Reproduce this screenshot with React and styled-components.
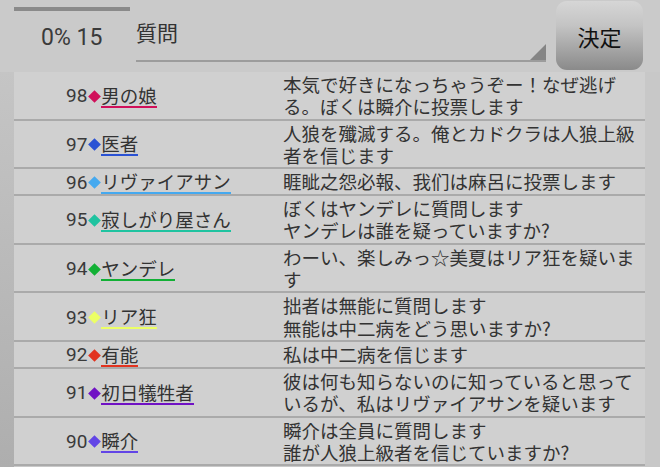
import React from "react";
import styled, { createGlobalStyle } from "styled-components";

const GlobalStyle = createGlobalStyle`
  html, body {
    margin: 0;
    padding: 0;
    background: #c9c9c9;
  }
  body {
    font-family: "Roboto", "Noto Sans CJK JP", sans-serif;
    color: #363636;
  }
`;

const rows = [
  { no: 98, color: "#d0105a", name: "男の娘", msg: "本気で好きになっちゃうぞー！なぜ逃げる。ぼくは瞬介に投票します" },
  { no: 97, color: "#2a52d4", name: "医者", msg: "人狼を殲滅する。俺とカドクラは人狼上級者を信じます" },
  { no: 96, color: "#45a9ef", name: "リヴァイアサン", msg: "睚眦之怨必報、我们は麻呂に投票します" },
  { no: 95, color: "#1fc3a0", name: "寂しがり屋さん", msg: "ぼくはヤンデレに質問します\nヤンデレは誰を疑っていますか?" },
  { no: 94, color: "#12b035", name: "ヤンデレ", msg: "わーい、楽しみっ☆美夏はリア狂を疑います" },
  { no: 93, color: "#ecff66", name: "リア狂", msg: "拙者は無能に質問します\n無能は中二病をどう思いますか?" },
  { no: 92, color: "#e2331f", name: "有能", msg: "私は中二病を信じます" },
  { no: 91, color: "#7012c4", name: "初日犠牲者", msg: "彼は何も知らないのに知っていると思っているが、私はリヴァイアサンを疑います" },
  { no: 90, color: "#6245e6", name: "瞬介", msg: "瞬介は全員に質問します\n誰が人狼上級者を信じていますか?" },
];

const Page = styled.div`
  width: 660px;
  height: 467px;
  overflow: hidden;
  display: flex;
  flex-direction: column;
`;

const Header = styled.div`
  height: 72px;
  display: flex;
  background: #cacaca;
`;

const ScoreBlock = styled.div`
  width: 122px;
  margin-left: 14px;
  display: flex;
  flex-direction: column;
`;

const Progress = styled.div`
  margin-top: 7px;
  width: 116px;
  height: 4px;
  background: #8a8a8a;
`;

const Score = styled.div`
  margin-top: 12px;
  padding-left: 27px;
  font-size: 23px;
  line-height: 30px;
  color: #3a3a3a;
`;

const QuestionField = styled.div`
  position: relative;
  width: 410px;
  box-sizing: content-box;
  height: 43px;
  padding-top: 17px;
  border-bottom: 2px solid #9c9c9c;
  font-family: "Noto Sans CJK JP", sans-serif;
  font-size: 21px;
  line-height: 30px;
  color: #333;
`;

const Corner = styled.div`
  position: absolute;
  right: 0;
  bottom: 0;
  width: 0;
  height: 0;
  border-left: 16px solid transparent;
  border-bottom: 16px solid #858585;
`;

const DecideButton = styled.button`
  margin: 1px 0 0 10px;
  width: 87px;
  height: 69px;
  border: none;
  border-radius: 11px;
  background: linear-gradient(#d6d6d6 0%, #c4c4c4 35%, #8a8a8a 100%);
  font-family: "Noto Sans CJK JP", sans-serif;
  font-size: 22px;
  color: #111;
  padding: 0;
`;

const Body = styled.div`
  flex: 1;
  display: flex;
`;

const LeftRail = styled.div`
  width: 14px;
  background: linear-gradient(#c5c5c5, #aeaeae);
`;

const List = styled.div`
  width: 631px;
  background: #d0d0d0;
  align-self: flex-start;
`;

const Row = styled.div`
  display: grid;
  grid-template-columns: 269px 1fr;
  border-bottom: 2px solid #aaaaaa;
`;

const Who = styled.div`
  display: flex;
  align-items: center;
  padding-left: 52px;
  padding-top: 2px;
`;

const Num = styled.span`
  font-size: 19px;
  line-height: 20px;
  color: #3a3a3a;
`;

const Diamond = styled.span`
  display: inline-block;
  flex: none;
  width: 9px;
  height: 9px;
  margin: 0 2px 0 3px;
  background: ${(p) => p.$color};
  transform: rotate(45deg);
`;

const Name = styled.span`
  font-family: "Noto Sans CJK JP", sans-serif;
  font-size: 18.5px;
  line-height: 21px;
  color: #333;
  border-bottom: 2.5px solid ${(p) => p.$color};
`;

const Message = styled.div`
  font-family: "Noto Sans CJK JP", sans-serif;
  font-size: 18.5px;
  line-height: 22.3px;
  padding: 1px 6px 1px 0;
  white-space: pre-line;
  color: #333;
`;

const RightRail = styled.div`
  flex: 1;
  background: #c8c8c8;
`;

export default function App() {
  return (
    <Page>
      <GlobalStyle />
      <Header>
        <ScoreBlock>
          <Progress />
          <Score>0% 15</Score>
        </ScoreBlock>
        <QuestionField>
          質問
          <Corner />
        </QuestionField>
        <DecideButton>決定</DecideButton>
      </Header>
      <Body>
        <LeftRail />
        <List>
          {rows.map((r) => (
            <Row key={r.no}>
              <Who>
                <Num>{r.no}</Num>
                <Diamond $color={r.color} />
                <Name $color={r.color}>{r.name}</Name>
              </Who>
              <Message>{r.msg}</Message>
            </Row>
          ))}
        </List>
        <RightRail />
      </Body>
    </Page>
  );
}
